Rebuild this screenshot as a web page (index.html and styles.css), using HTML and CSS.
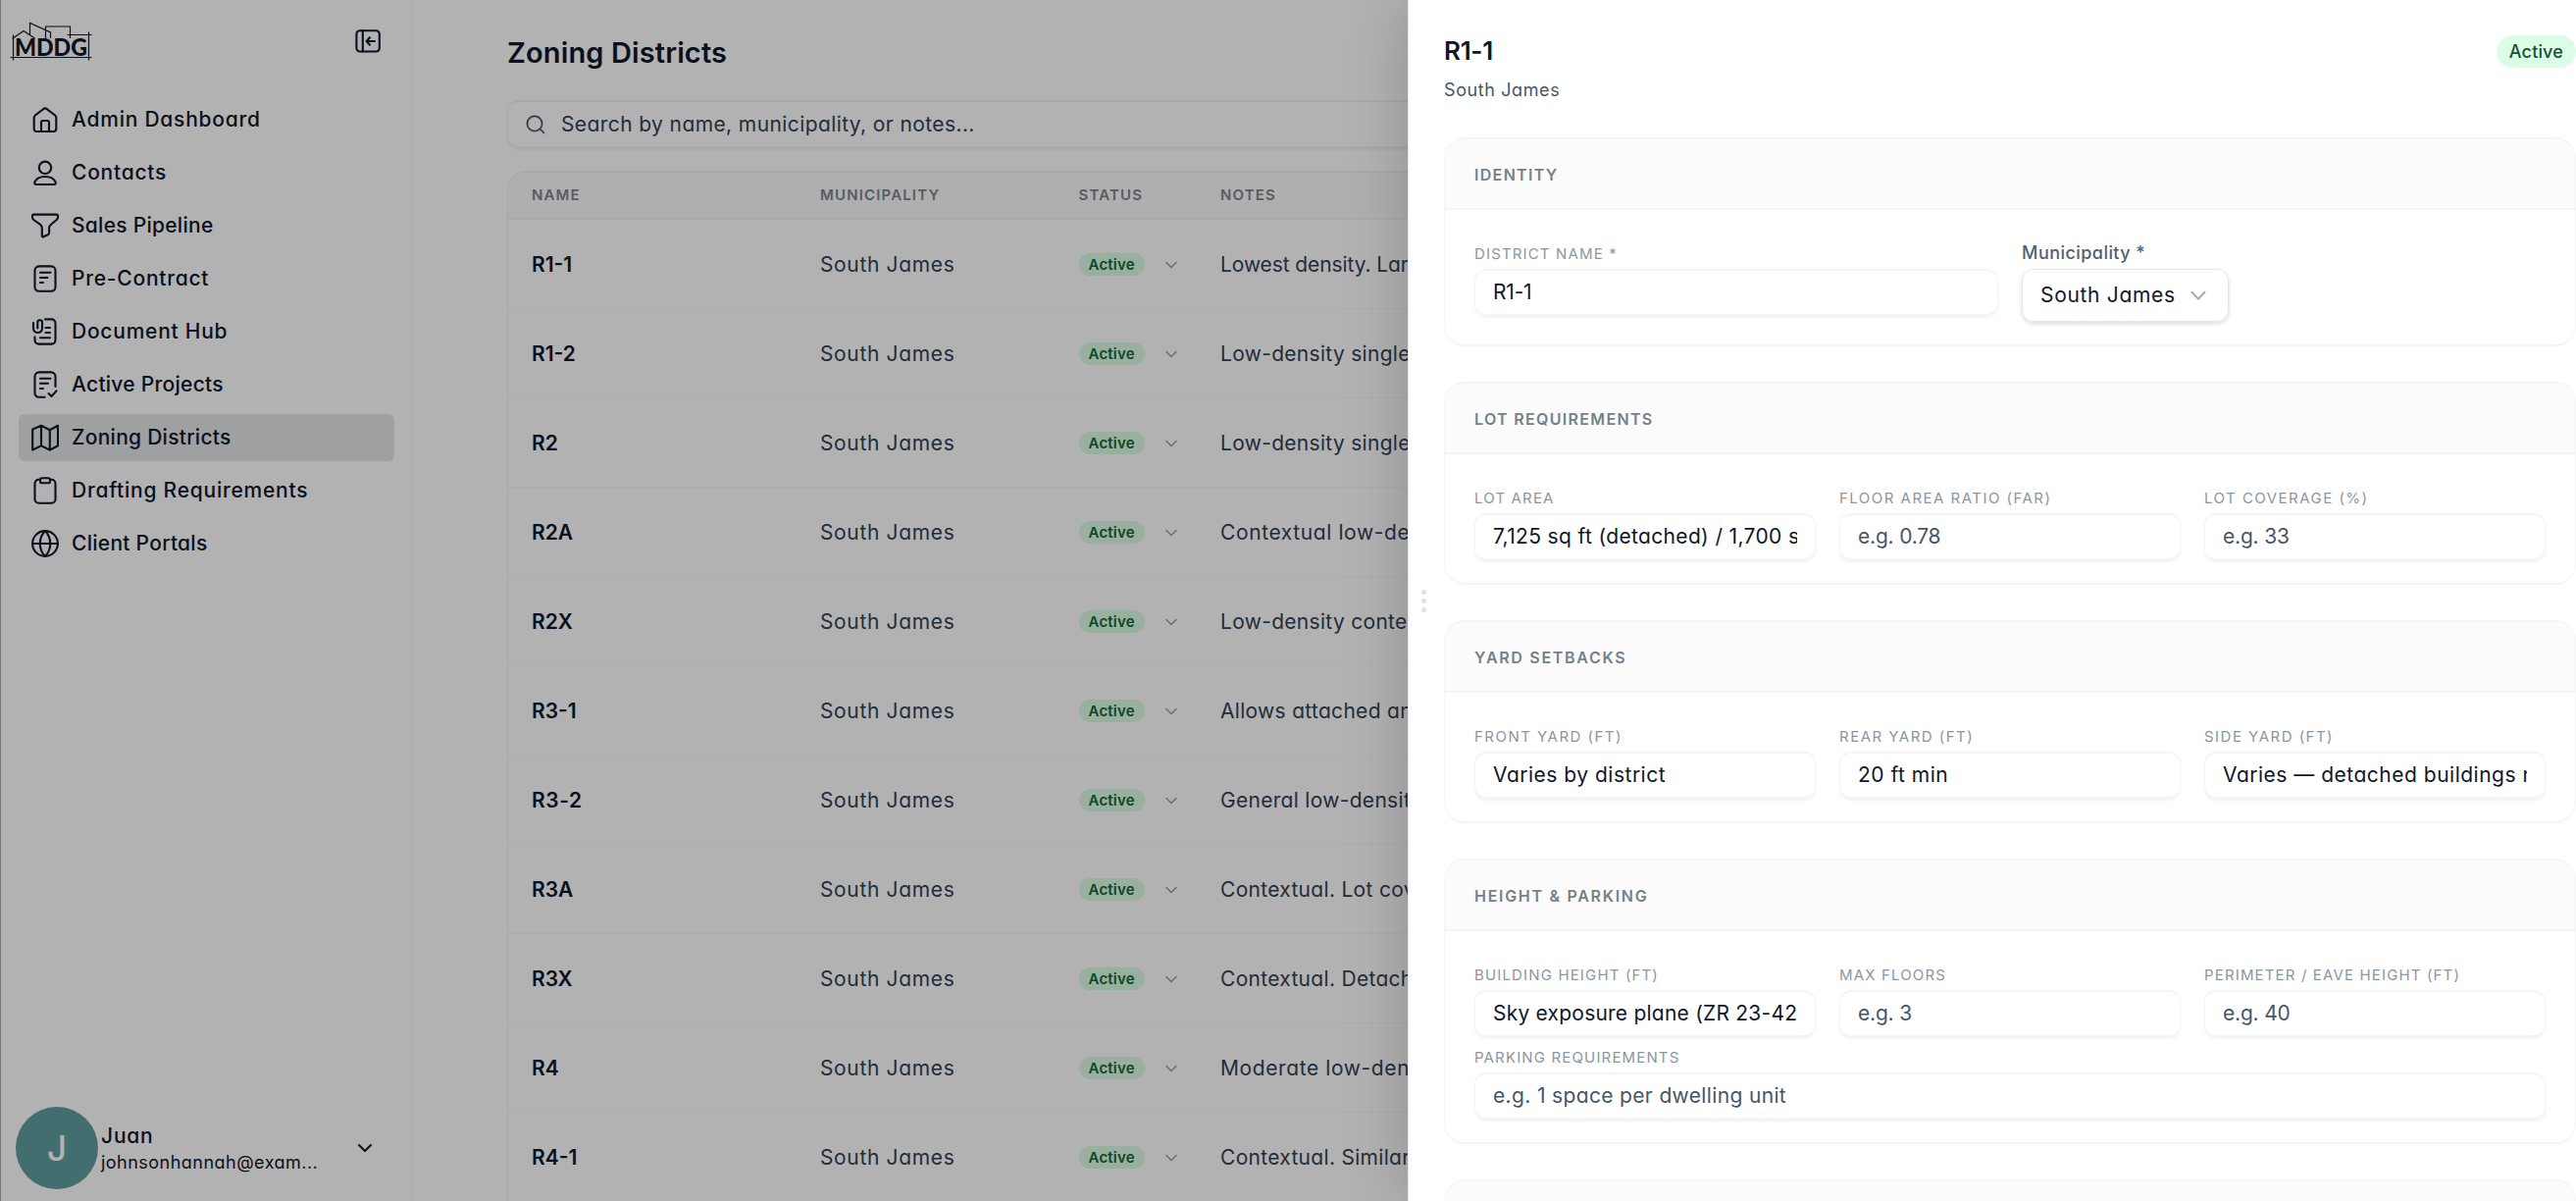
FILE: index.html
```html
<!DOCTYPE html>
<html lang="en">
<head>
<meta charset="utf-8">
<title>Zoning Districts</title>
<link rel="stylesheet" href="styles.css">
</head>
<body>
<div class="app">
  <aside class="sidebar">
    <div class="brand">
      <svg class="logo" width="86" height="42" viewBox="0 0 86 42" fill="none" stroke="#0f172a" stroke-width="1.2">
        <path d="M3.500 13.500v26M80.500 10.500v29M.500 36.500h83M2.500 17.500 14 9.500l11.500 7.500M20.500 14V1.500l21 9.500v6M36.500 17.500V5h25v12M58.500 13.500h25"/>
        <text class="logo-text" x="5" y="34.500" textLength="74" lengthAdjust="spacingAndGlyphs">MDDG</text>
      </svg>
      <svg width="28" height="28" viewBox="0 0 28 28" class="icon">
        <rect x="2.400" y="3.300" width="23.400" height="21.200" rx="3.500"/><path d="M8.800 3.300v21.200M21 14h-8M16 10.200 12.600 14l3.400 3.800"/>
      </svg>
    </div>
    <nav class="nav">
      <a class="nav-item wide"><svg width="28" height="28" viewBox="0 0 28 28" class="icon"><path d="M2.700 11.800c0-1 .4-1.700 1.200-2.300L12.600 2.900c.9-.7 1.900-.7 2.800 0l8.700 6.600c.8.600 1.200 1.300 1.200 2.300v11.500c0 1.800-.9 2.700-2.700 2.700H5.400c-1.800 0-2.700-.9-2.700-2.700zM10 26v-9.200c0-1.200.6-1.800 1.800-1.800h4.400c1.200 0 1.800.6 1.800 1.800V26"/></svg>Admin Dashboard</a>
      <a class="nav-item wide"><svg width="28" height="28" viewBox="0 0 28 28" class="icon"><circle cx="14" cy="8.800" r="6.200"/><path d="M3.400 23.500C5 20 9 18 14 18s9 2 10.600 5.500c.6 1.400-.1 2.500-1.600 2.500H5c-1.500 0-2.200-1.100-1.600-2.500z"/></svg>Contacts</a>
      <a class="nav-item"><svg width="28" height="28" viewBox="0 0 28 28" class="icon"><path d="M2.400 2.600h23.200c1 0 1.400.5 1.400 1.400v1.200c0 1.200-.4 2-1.300 2.800l-6.200 5.200c-.9.8-1.400 1.600-1.400 2.800v5.300c0 1-.4 1.600-1.300 2l-4.400 2c-.9.400-1.600 0-1.600-1V16c0-1.200-.4-2-1.300-2.800L2.300 8C1.400 7.200 1 6.400 1 5.200V4c0-.9.400-1.400 1.400-1.400z"/></svg>Sales Pipeline</a>
      <a class="nav-item wide"><svg width="28" height="28" viewBox="0 0 28 28" class="icon"><rect x="3.500" y="1.400" width="21" height="25.400" rx="4.200"/><path d="M9 7.700h10.500M9 13h7.500M9 18h3"/></svg>Pre-Contract</a>
      <a class="nav-item wide"><svg width="28" height="28" viewBox="0 0 28 28" class="icon"><path d="M14 1.400h6.500a4 4 0 0 1 4 4v17.200a4 4 0 0 1-4 4h-13a4 4 0 0 1-4-4v-3.200M14.500 10H19M14.500 15H19M9 20.200h10"/><path d="M2 5v5.500a4.500 4.500 0 0 0 9 0v-6c0-3-4.700-3-4.700 0v6"/></svg>Document Hub</a>
      <a class="nav-item"><svg width="28" height="28" viewBox="0 0 28 28" class="icon"><path d="M24.500 16V5.600a4.200 4.200 0 0 0-4.200-4.200H7.700a4.200 4.200 0 0 0-4.200 4.200v17a4.200 4.200 0 0 0 4.200 4.200h6M9 7.700h10.500M9 12.800h8M9 18h3M17.500 23l3 3 5-5.600"/></svg>Active Projects</a>
      <a class="nav-item active"><svg width="28" height="28" viewBox="0 0 28 28" class="icon"><path d="M1.200 5.500 10 1.800l8.800 4.400L27 1.800v20.400l-8.200 4.400L10 22.200l-8.800 4.400zM10 1.800v20.400M18.800 6.200v20.400"/></svg>Zoning Districts</a>
      <a class="nav-item wide"><svg width="28" height="28" viewBox="0 0 28 28" class="icon"><path d="M9 2.800H7.500a4 4 0 0 0-4 4v15.900a4 4 0 0 0 4 4h13a4 4 0 0 0 4-4V6.800a4 4 0 0 0-4-4H19"/><rect x="9" y="1.200" width="10" height="5" rx="1.800"/></svg>Drafting Requirements</a>
      <a class="nav-item"><svg width="28" height="28" viewBox="0 0 28 28" class="icon"><circle cx="14" cy="14" r="12.900"/><path d="M1.100 14h25.800M14 1.100c-7 7-7 18.800 0 25.800M14 1.100c7 7 7 18.800 0 25.800"/></svg>Client Portals</a>
    </nav>
    <div class="user">
      <div class="avatar">J</div>
      <div class="user-info"><div class="user-name">Juan</div><div class="user-mail">johnsonhannah@exam...</div></div>
      <svg class="icon" width="16" height="10" viewBox="0 0 16 10"><path d="m2 2 6 6 6-6"/></svg>
    </div>
  </aside>

  <main class="main">
    <h1>Zoning Districts</h1>
    <div class="search">
      <svg width="20" height="20" viewBox="0 0 20 20" class="search-icon"><circle cx="9" cy="9" r="7.600"/><path d="m14.500 14.500 4 4"/></svg>
      Search by name, municipality, or notes...
    </div>
    <div class="table">
      <div class="row head"><span>NAME</span><span>MUNICIPALITY</span><span>STATUS</span><span>NOTES</span></div>
      <div class="row"><b>R1-1</b><span>South James</span><span class="status"><i>Active</i><svg width="12" height="8" viewBox="0 0 12 8"><path d="m1 1.500 5 5 5-5"/></svg></span><span class="note first">Lowest density. Large lots</span></div>
      <div class="row"><b>R1-2</b><span>South James</span><span class="status"><i>Active</i><svg width="12" height="8" viewBox="0 0 12 8"><path d="m1 1.500 5 5 5-5"/></svg></span><span class="note">Low-density single-family</span></div>
      <div class="row"><b>R2</b><span>South James</span><span class="status"><i>Active</i><svg width="12" height="8" viewBox="0 0 12 8"><path d="m1 1.500 5 5 5-5"/></svg></span><span class="note">Low-density single-family</span></div>
      <div class="row"><b>R2A</b><span>South James</span><span class="status"><i>Active</i><svg width="12" height="8" viewBox="0 0 12 8"><path d="m1 1.500 5 5 5-5"/></svg></span><span class="note wide">Contextual low-density</span></div>
      <div class="row"><b>R2X</b><span>South James</span><span class="status"><i>Active</i><svg width="12" height="8" viewBox="0 0 12 8"><path d="m1 1.500 5 5 5-5"/></svg></span><span class="note">Low-density contextual</span></div>
      <div class="row"><b>R3-1</b><span>South James</span><span class="status"><i>Active</i><svg width="12" height="8" viewBox="0 0 12 8"><path d="m1 1.500 5 5 5-5"/></svg></span><span class="note">Allows attached and</span></div>
      <div class="row"><b class="wide">R3-2</b><span>South James</span><span class="status"><i>Active</i><svg width="12" height="8" viewBox="0 0 12 8"><path d="m1 1.500 5 5 5-5"/></svg></span><span class="note">General low-density</span></div>
      <div class="row"><b>R3A</b><span>South James</span><span class="status"><i>Active</i><svg width="12" height="8" viewBox="0 0 12 8"><path d="m1 1.500 5 5 5-5"/></svg></span><span class="note">Contextual. Lot coverage</span></div>
      <div class="row"><b>R3X</b><span>South James</span><span class="status"><i>Active</i><svg width="12" height="8" viewBox="0 0 12 8"><path d="m1 1.500 5 5 5-5"/></svg></span><span class="note">Contextual. Detached</span></div>
      <div class="row"><b>R4</b><span>South James</span><span class="status"><i>Active</i><svg width="12" height="8" viewBox="0 0 12 8"><path d="m1 1.500 5 5 5-5"/></svg></span><span class="note wide">Moderate low-density</span></div>
      <div class="row"><b>R4-1</b><span>South James</span><span class="status"><i>Active</i><svg width="12" height="8" viewBox="0 0 12 8"><path d="m1 1.500 5 5 5-5"/></svg></span><span class="note">Contextual. Similar</span></div>
    </div>
  </main>
</div>
<div class="overlay"></div>

<section class="drawer">
  <div class="grip"><i></i><i></i><i></i></div>
  <header class="drawer-head">
    <div><h2>R1-1</h2><p>South James</p></div>
    <span class="pill">Active</span>
  </header>

  <div class="card">
    <h3>IDENTITY</h3>
    <div class="fields two">
      <div class="field"><label>DISTRICT NAME *</label><div class="input tight">R1-1</div></div>
      <div class="field"><label class="plain">Municipality *</label>
        <div class="select">South James<svg width="16" height="11" viewBox="0 0 16 11"><path d="m1.500 1.800 6.500 7 6.500-7"/></svg></div></div>
    </div>
  </div>

  <div class="card">
    <h3>LOT REQUIREMENTS</h3>
    <div class="fields">
      <div class="field"><label>LOT AREA</label><div class="input"><span>7,125 sq ft (detached) / 1,700 sq ft</span></div></div>
      <div class="field"><label class="loose">FLOOR AREA RATIO (FAR)</label><div class="input empty tight">e.g. 0.78</div></div>
      <div class="field"><label class="loose">LOT COVERAGE (%)</label><div class="input empty tight">e.g. 33</div></div>
    </div>
  </div>

  <div class="card">
    <h3 class="loose">YARD SETBACKS</h3>
    <div class="fields">
      <div class="field"><label class="loose">FRONT YARD (FT)</label><div class="input wide">Varies by district</div></div>
      <div class="field"><label class="loose">REAR YARD (FT)</label><div class="input wide">20 ft min</div></div>
      <div class="field"><label class="loose">SIDE YARD (FT)</label><div class="input wide"><span>Varies — detached buildings need</span></div></div>
    </div>
  </div>

  <div class="card">
    <h3 class="loose">HEIGHT &amp; PARKING</h3>
    <div class="fields">
      <div class="field"><label>BUILDING HEIGHT (FT)</label><div class="input snug"><span>Sky exposure plane (ZR 23-42)</span></div></div>
      <div class="field"><label>MAX FLOORS</label><div class="input empty tight">e.g. 3</div></div>
      <div class="field"><label>PERIMETER / EAVE HEIGHT (FT)</label><div class="input empty tight">e.g. 40</div></div>
      <div class="field full"><label>PARKING REQUIREMENTS</label><div class="input empty">e.g. 1 space per dwelling unit</div></div>
    </div>
  </div>

  <div class="card"><h3></h3></div>
</section>
</body>
</html>
```
FILE: styles.css
```css
* { box-sizing: border-box; }
body {
  margin: 0;
  height: 1224px;
  overflow: hidden;
  background: #fff;
  color: #0f172a;
  font: 400 21px/1.4 Inter, "Liberation Sans", sans-serif;
  font-feature-settings: "cv11";
}
h1, h2, h3, p { margin: 0; }

.app { display: flex; height: 1224px; }

/* Sidebar */
.sidebar {
  width: 421px;
  flex: none;
  display: flex;
  flex-direction: column;
  border-left: 1px solid #a8a9ae;
  border-right: 1px solid #f7f7f7;
}
.icon { flex: none; fill: none; stroke: #0f172a; stroke-width: 2.1; stroke-linecap: round; stroke-linejoin: round; }
.brand { display: flex; justify-content: space-between; padding: 22px 31px 0 9px; height: 95px; }
.brand .icon { margin-top: 6px; }
.logo-text { font: 900 24px Lato, sans-serif; fill: #0f172a; stroke: none; }
.nav { display: flex; flex-direction: column; gap: 6px; padding: 3px 18px 0; }
.nav-item {
  display: flex;
  align-items: center;
  gap: 13px;
  height: 48px;
  padding-left: 13px;
  border-radius: 6px;
  font-weight: 500;
  letter-spacing: .27px;
  white-space: nowrap;
}
.nav-item.wide { letter-spacing: .76px; }
.nav-item.active { background: #e4e6e8; }
.user { display: flex; align-items: center; margin-top: auto; padding: 0 40px 12px 15px; }
.avatar {
  width: 84px; height: 84px; flex: none;
  display: grid; place-items: center;
  border-radius: 50%;
  background: #5f9ea0; color: #fff;
  font-size: 35px; font-weight: 500;
}
.user-info { flex: 1; padding: 2px 0 0 3px; white-space: nowrap; }
.user-name { font-weight: 500; line-height: 28px; letter-spacing: .8px; }
.user-mail { font-size: 18px; line-height: 26px; letter-spacing: .48px; }

/* Table page */
.main { flex: none; width: 2150px; padding: 32px 0 0 96px; }
h1 { font-size: 29px; font-weight: 600; line-height: 44px; letter-spacing: .13px; }
.search {
  display: flex; align-items: center; gap: 16px;
  height: 49px; margin-top: 26px; padding-left: 18px;
  border: 2px solid #f3f3f3; border-left-width: 1px; border-radius: 12px;
  box-shadow: 0 2px 3px rgba(0,0,0,.05);
  color: #334155; letter-spacing: .4px;
}
.search-icon { fill: none; stroke: #475569; stroke-width: 1.700; stroke-linecap: round; }
.table { margin-top: 23px; border: 2px solid #f3f3f3; border-left-width: 1px; border-radius: 20px 0 0 0; overflow: hidden; }
.row {
  display: grid;
  grid-template-columns: 294px 263.500px 144.500px 1fr;
  align-items: center;
  height: 91px;
  padding: 1px 0 0 24px;
  border-bottom: 1px solid #f8f8f8;
  color: #334155;
  letter-spacing: .65px;
}
.row b { font-weight: 600; color: #0f172a; letter-spacing: 0; }
.row b.wide { letter-spacing: .6px; }
.row.head {
  height: 48px;
  padding-top: 0;
  background: #fbfbfb;
  border-bottom: 2px solid #f3f3f3;
  color: #7b858f;
  font-size: 15px; font-weight: 600; line-height: 19px; letter-spacing: 1.150px;
}
.row.head span { padding-bottom: 2px; }
.status { display: flex; align-items: center; gap: 21px; }
.status i {
  padding: 0 10px; height: 23px;
  border-radius: 12px;
  background: #dcfce7; color: #166534;
  font: 600 15px/23px Inter, sans-serif; letter-spacing: .2px;
}
.status svg, .select svg { fill: none; stroke: #94a3b8; stroke-width: 1.600; stroke-linecap: round; stroke-linejoin: round; }
.note { letter-spacing: .3px; white-space: nowrap; }
.note.first { letter-spacing: -.1px; }
.note.wide { letter-spacing: .6px; }

.overlay { position: absolute; inset: 0; background: rgba(0,0,0,.3); }

/* Drawer */
.drawer {
  position: absolute; top: 0; right: 0;
  width: 1191px; height: 1224px;
  padding: 32px 0 0 36px;
  overflow: hidden;
  display: flex; flex-direction: column; gap: 36px;
  background: #fff;
  border-left: 1px solid #e6e6e6;
  box-shadow: 0 0 60px rgba(0,0,0,.2);
}
.grip { position: absolute; left: 13px; top: 601px; display: grid; gap: 4.500px; }
.grip i { width: 4.500px; height: 4.500px; border-radius: 50%; background: #e2e2e2; }
.drawer-head { display: flex; justify-content: space-between; align-items: flex-start; height: 72px; }
h2 { font-size: 26px; font-weight: 600; line-height: 40px; letter-spacing: -.3px; }
.drawer-head p { font-size: 18px; line-height: 39px; color: #475569; letter-spacing: .6px; }
.pill {
  margin-top: 4px; padding: 0 13px; height: 33px;
  border-radius: 17px; background: #dcfce7; color: #14532d;
  font-size: 18px; font-weight: 500; line-height: 33px; letter-spacing: .15px;
}
.card { flex: none; border: 2px solid #f5f5f5; border-width: 2px 1px; border-radius: 21px; overflow: hidden; }
h3 {
  height: 72px; padding-left: 30px;
  background: #fbfbfb; border-bottom: 2px solid #f4f4f4;
  color: #74818c; font-size: 16px; font-weight: 600; line-height: 73px; letter-spacing: 1.320px;
}
h3.loose { letter-spacing: 1.700px; }
.fields { display: grid; grid-template-columns: repeat(3, 1fr); gap: 6px 24px; padding: 30px 30px 23px; }
.fields.two { grid-template-columns: 1fr 1fr; }
.full { grid-column: 1 / -1; }
.field { min-width: 0; }
label { display: block; height: 30px; line-height: 29px; color: #8c96a1; font-size: 15px; letter-spacing: 1.150px; white-space: nowrap; }
label.loose { letter-spacing: 1.480px; }
label.plain { color: #526272; font-size: 18px; font-weight: 500; letter-spacing: .45px; line-height: 28px; }
.input {
  height: 48px; padding: 0 18px; line-height: 44px;
  border: 2px solid #f5f5f5; border-width: 2px 1px; border-radius: 12px;
  box-shadow: 0 2px 3px rgba(0,0,0,.05);
  letter-spacing: .35px; white-space: nowrap;
}
.input span { display: block; overflow: hidden; height: 44px; }
.input.wide { letter-spacing: .5px; }
.input.snug { letter-spacing: .22px; }
.input.tight { letter-spacing: -.2px; }
.input.empty { color: #475569; }
.select {
  display: flex; align-items: center; justify-content: space-between;
  width: 211px; height: 54px; padding: 0 22px 0 18px;
  border: 1px solid #e6e6e6; border-radius: 12px;
  box-shadow: 0 2px 4px rgba(0,0,0,.14);
  letter-spacing: .68px;
}
.select svg { stroke: #a9a9a9; stroke-width: 2; }
```
